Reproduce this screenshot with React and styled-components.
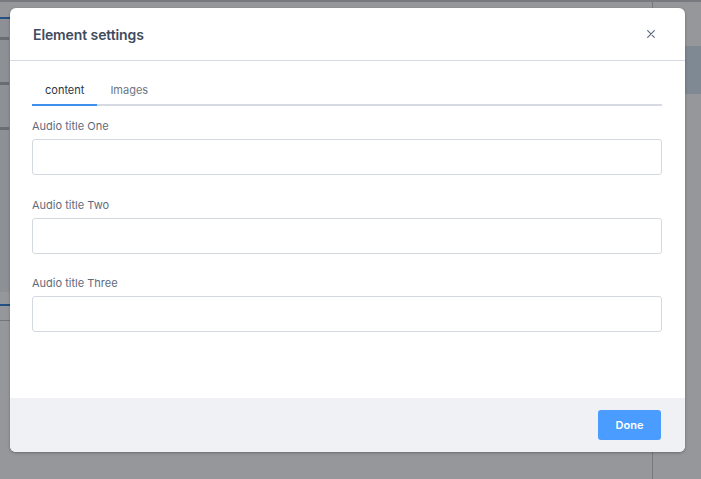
import React, { useState } from "react";
import styled, { createGlobalStyle } from "styled-components";

const GlobalStyle = createGlobalStyle`
  html, body {
    margin: 0;
    padding: 0;
    background: #fff;
    font-family: Inter, "Noto Sans", sans-serif;
  }
`;

const Page = styled.div`
  position: relative;
  width: 701px;
  height: 479px;
  overflow: hidden;
  display: grid;
  grid-template-columns: 652px 1fr;
  background: #fff;
`;

const Workspace = styled.div`
  border-top: 2px solid #c9ccd1;
  display: flex;
  flex-direction: column;
`;

const TopStrip = styled.div`
  height: 15px;
  border-bottom: 2px solid #3b82d6;
`;

const SidePanel = styled.div`
  width: 100%;
  height: 255px;
  background: #f1f2f4;
  display: flex;
  flex-direction: column;
  padding-top: 18px;
  gap: 42px;
`;

const Tick = styled.div`
  width: 9px;
  height: 3px;
  background: #b2b5ba;
`;

const PanelFoot = styled.div`
  height: 12px;
  border-bottom: 2px solid #3b82d6;
`;

const PanelRule = styled.div`
  height: 14px;
  border-bottom: 1px solid #c3c6cb;
`;

const RightBar = styled.div`
  border-left: 1px solid #c8ccd2;
  border-top: 2px solid #c9ccd1;
  padding-top: 44px;
  display: flex;
  justify-content: flex-end;
`;

const RightBlock = styled.div`
  width: 16px;
  height: 48px;
  background: #d9e6f3;
`;

const Overlay = styled.div`
  position: absolute;
  inset: 0;
  background: rgba(10, 14, 20, 0.43);
`;

const Modal = styled.div`
  position: absolute;
  left: 10px;
  top: 8px;
  width: 675px;
  height: 444px;
  background: #fff;
  border-radius: 6px;
  box-shadow: 0 1px 3px rgba(0, 0, 0, 0.3);
  display: flex;
  flex-direction: column;
  overflow: hidden;
`;

const Header = styled.div`
  height: 53px;
  box-sizing: border-box;
  border-bottom: 1px solid #d6dae1;
  display: flex;
  align-items: center;
  justify-content: space-between;
  padding: 0 30px 0 23px;
`;

const Title = styled.h2`
  margin: 0;
  font-size: 14px;
  font-weight: 600;
  color: #3e4b5d;
  letter-spacing: -0.1px;
`;

const CloseButton = styled.button`
  border: none;
  background: none;
  padding: 0;
  width: 8px;
  height: 8px;
  display: flex;
  align-items: center;
  justify-content: center;
  color: #5d6b80;
  cursor: pointer;
`;

const Body = styled.div`
  flex: 1;
  padding: 22px 23px 0 22px;
`;

const TabRow = styled.div`
  display: flex;
  border-bottom: 2px solid #d6dae3;
  margin-bottom: 13px;
`;

const Tab = styled.button`
  border: none;
  background: none;
  font-family: inherit;
  font-size: 11px;
  line-height: 14px;
  padding: 0 13px 7px;
  margin-bottom: -2px;
  border-bottom: 2px solid ${(p) => (p.$active ? "#3f8ff0" : "transparent")};
  color: ${(p) => (p.$active ? "#2c3644" : "#6b7685")};
  cursor: pointer;
`;

const Field = styled.div`
  display: flex;
  flex-direction: column;
  margin-bottom: 22.5px;
`;

const Label = styled.label`
  font-size: 11px;
  line-height: 14px;
  color: #5f6b7b;
  margin-bottom: 6px;
`;

const Input = styled.input`
  height: 36px;
  box-sizing: border-box;
  border: 1px solid #d4d8e0;
  border-radius: 3px;
  padding: 0 10px;
  font-family: inherit;
  font-size: 12px;
  outline: none;
`;

const Footer = styled.div`
  height: 54px;
  box-sizing: border-box;
  background: #f0f1f5;
  display: flex;
  align-items: center;
  justify-content: flex-end;
  padding: 0 24px;
`;

const DoneButton = styled.button`
  width: 63px;
  height: 30px;
  border: none;
  border-radius: 3px;
  background: #4a9dfe;
  color: #fff;
  font-family: inherit;
  font-size: 11px;
  font-weight: 600;
  cursor: pointer;
`;

const fields = ["Audio title One", "Audio title Two", "Audio title Three"];

export default function App() {
  const [tab, setTab] = useState("content");

  return (
    <>
      <GlobalStyle />
      <Page>
        <Workspace>
          <TopStrip />
          <SidePanel>
            <Tick />
            <Tick />
            <Tick />
          </SidePanel>
          <PanelFoot />
          <PanelRule />
        </Workspace>
        <RightBar>
          <RightBlock />
        </RightBar>
        <Overlay />
        <Modal>
          <Header>
            <Title>Element settings</Title>
            <CloseButton aria-label="Close">
              <svg width="8" height="8" viewBox="0 0 8 8">
                <path
                  d="M0.7 0.7L7.3 7.3M7.3 0.7L0.7 7.3"
                  stroke="currentColor"
                  strokeWidth="1.2"
                  strokeLinecap="round"
                />
              </svg>
            </CloseButton>
          </Header>
          <Body>
            <TabRow>
              <Tab $active={tab === "content"} onClick={() => setTab("content")}>
                content
              </Tab>
              <Tab $active={tab === "images"} onClick={() => setTab("images")}>
                Images
              </Tab>
            </TabRow>
            {fields.map((f) => (
              <Field key={f}>
                <Label>{f}</Label>
                <Input type="text" />
              </Field>
            ))}
          </Body>
          <Footer>
            <DoneButton>Done</DoneButton>
          </Footer>
        </Modal>
      </Page>
    </>
  );
}
